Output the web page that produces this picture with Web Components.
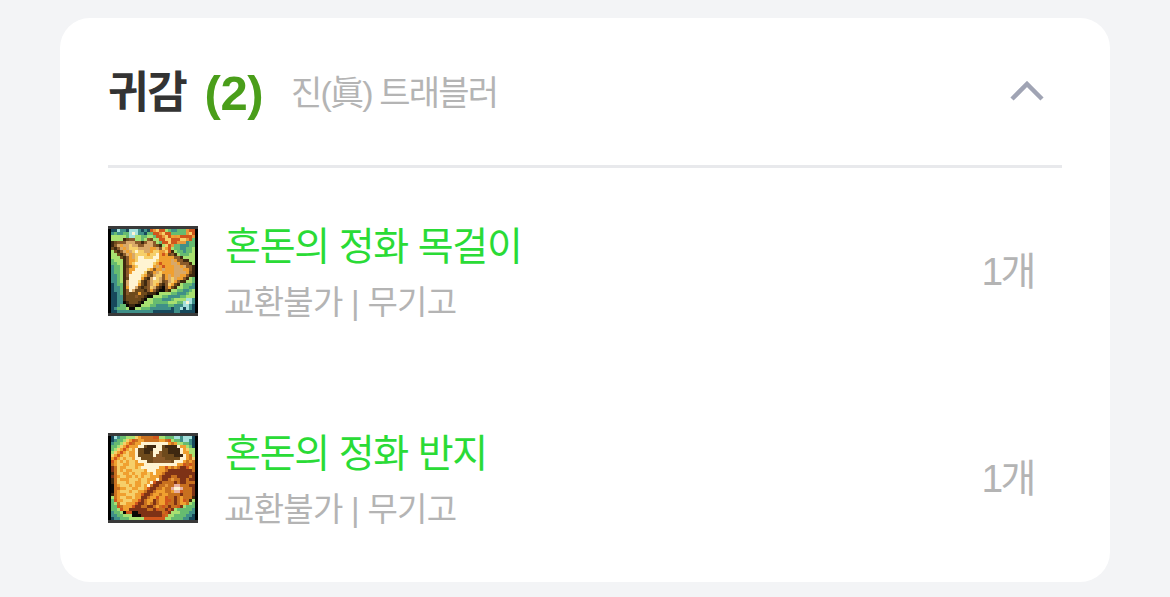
<!DOCTYPE html>
<html lang="ko">
<head>
<meta charset="utf-8">
<title>귀감</title>
<style>
  html, body { margin: 0; height: 100%; overflow: hidden; background: #f3f4f6; }
  body { padding: 18px 60px 15px; box-sizing: border-box; font-family: "Liberation Sans", "Noto Sans CJK KR", sans-serif; }
</style>
</head>
<body>
<set-card>
  <span slot="title">귀감</span>
  <span slot="count">(2)</span>
  <span slot="sub">진(眞) 트래블러</span>
  <set-item icon="necklace" name="혼돈의 정화 목걸이" info="교환불가 | 무기고" qty="1개"></set-item>
  <set-item icon="ring" name="혼돈의 정화 반지" info="교환불가 | 무기고" qty="1개"></set-item>
</set-card>

<script>
const PALETTE = {
  k: '#0a0806', d: '#3e2810', b: '#8a5a2a', o: '#e8983a', O: '#f0a030', y: '#f6cf6a', w: '#fff4d2', t: '#d8a868',
  r: '#d0561c', R: '#7e3216', g: '#a8e070', G: '#66bb70', T: '#3f8f88', N: '#17495c', L: '#a4e0dc',
  m: '#6e4a1c', c: '#c8701f', p: '#e8b0a0'
};

const ICONS = {
  necklace: [
    'NNLTTNLLLTNTNroyrrgGTTGGGorr',
    'TGTTGGLwLTTNGGrroyrrGGGGGoyr',
    'gggggGLLggGGggGrroyrOoOrrrro',
    'ggggdmbbggGgbmggrryyrrryyorG',
    'dmbbbtttbbdbttbgGrryrroooTGG',
    'dbtOttyttbbtttbmdgyroGGTTTGG',
    'mdbtOtyyyttttOOtbyOrgGGTTGGg',
    'gmdbtOtywyyttOyyOoyrdgGGTGGg',
    'ggmdbtOtyyyyOyywOrOmbdgGGGgg',
    'gggmdbOtywwyyywwOOOOObbdgggg',
    'GgggdbOOywwwwwwyOOOOtObbddgg',
    'GGggdbOywwwwwwyOrOOOttObbbdg',
    'TGGgdmbOywwwwwOtOrOOOttOtbbd',
    'TGGgdbOOwwwwyObOOtOOOtttOObd',
    'TGGgdbOwwwwymbOtyOOOOttttOmd',
    'TTGgdbwwwwyObmtyybOtOttOObdd',
    'TTGgdmwwwwOmdtwytbOtytOObdgG',
    'TTGgdtwwwymdbtyytmbtyObddggG',
    'NTGGdtwwwOmdbtyOmdbyOmdgGGGT',
    'NTTGdOwwtmdmbytmdkbOmdggGGTT',
    'NTTGdbwtmmmdbObdkkmdggGGTTGg',
    'NNTGdbmmmOmmdddkggggGGTTTGgg',
    'NNTTdmmmbmmdkkgggGGTTTTGGggg',
    'NNTTdmmmmmdkggGGGTTTGggggLLT',
    'NNTTkdmmmdkgggGGGGGgggGGLwLT',
    'NNTGGkddkkgggGGTTTTGGTTTLLTN',
    'NTGGGgkkggGGGTTTTTTTNTTLNLTN',
    'NNTTTTTTTTTTTTNNNNNNNTTNNNNN'
  ],
  ring: [
    'NLTGGgggyOccccrrggGGGLLTLLLN',
    'NTGGgyOrcOOcccccOOcrgGGTLLTN',
    'TGGgyOrcOOwwwwwwwwwOcOggGGTN',
    'GGgyOrOOOwwmdddwwmddddwOOgGN',
    'GgyOrOyOwmmdddwwwmmddddwOygg',
    'gyOrOyOOwmmddmwwbmmddddwOOgg',
    'yOrOyyOOwmmmmmwbbmmmmdddwOcg',
    'OrOyOyyOwwmmmmbbbbmmmmmwwOcy',
    'rOyOyOyyOwwwmmbbbbbbmwwwOcOc',
    'cOyyOOyyOOOwwwwwwwwwwwOOrcrc',
    'RcyOOyyyOywwwwwwOOrOcOcRRrOc',
    'RcyOyOOyyyyOwwwOOOcRRRRRRRRc',
    'dcyyOOyOyyOOyOwOOcRRRRRRRRRR',
    'RcOyyOOyOyOyyOOOcRRRccRRRRcR',
    'dcyOOOyyyOyyOOOwcRRcoccRRcRR',
    'dcyyyOyyOOyyOwrRRccccRcRRccc',
    'kcOyyyOyOOyOwcRRccoccppcccRR',
    'kccOOyyOOyyOrRRccOccpwwpcccR',
    'kcOyyyOyyOOcRRcOOOccOpprcccR',
    'dcOOOyyyOOrRRcOOcOOccccRcccR',
    'gcOyyOOyOORRcOOrOOrccRcOcccd',
    'GrOOyyyOOrRcOORcOOrrcRcOrcdg',
    'GgcyyOOOrRRcOcRcOOrccRcOOcgG',
    'GGrcOOOrRRccRRcOcrcRccrRgGGG',
    'GGgrOORRRRRRccRrccRrRgGGGGGT',
    'TGGgkrrkkRRRRRRRRcrRgggGGGTT',
    'TTGGgggkkkRRRRRRRrcggGGGGTTN',
    'NTTGGGgggggrrrrrrrggGGGGTTNN'
  ]
};

class ItemIcon extends HTMLElement {
  connectedCallback() {
    const rows = ICONS[this.getAttribute('name')] || [];
    let rects = '';
    rows.forEach((row, y) => {
      [...row].forEach((ch, x) => {
        rects += `<rect x="${x + 1}" y="${y + 1}" width="1" height="1" fill="${PALETTE[ch]}"/>`;
      });
    });
    this.attachShadow({ mode: 'open' }).innerHTML = `
      <style>
        :host { display: block; width: 90px; height: 90px; flex: none; }
        svg { display: block; width: 90px; height: 90px; }
      </style>
      <svg viewBox="0 0 30 30" shape-rendering="crispEdges">
        <rect width="30" height="30" fill="#000"/>
        <rect width="30" height="1" fill="#3a3a3a"/>
        <rect y="29" width="30" height="1" fill="#3a3a3a"/>
        ${rects}
      </svg>`;
  }
}

class SetItem extends HTMLElement {
  connectedCallback() {
    const a = n => this.getAttribute(n);
    this.attachShadow({ mode: 'open' }).innerHTML = `
      <style>
        :host { display: flex; align-items: center; height: 90px; }
        .text { flex: 1; margin-left: 28px; display: flex; flex-direction: column; gap: 13px; margin-top: 4px; }
        .name { font-size: 39px; line-height: 46px; color: #2adb36; letter-spacing: -1.2px; margin-left: -1px; }
        .info { font-size: 33px; line-height: 40px; color: #b4b4b4; letter-spacing: -.7px; margin-left: -2px; }
        .qty { font-size: 39px; line-height: 46px; color: #b4b4b4; letter-spacing: -2.5px; margin-right: 28px; margin-top: 2px; }
      </style>
      <item-icon name="${a('icon')}"></item-icon>
      <div class="text">
        <div class="name">${a('name')}</div>
        <div class="info">${a('info')}</div>
      </div>
      <div class="qty">${a('qty')}</div>`;
  }
}

class SetCard extends HTMLElement {
  constructor() {
    super();
    this.attachShadow({ mode: 'open' }).innerHTML = `
      <style>
        :host { display: block; background: #fff; border-radius: 30px; padding: 0 48px 59px; height: 564px; box-sizing: border-box; }
        header { display: flex; align-items: center; height: 145px; border-bottom: 3px solid #e8e9ec; padding-top: 2px; box-sizing: content-box; }
        .title { font-size: 44px; font-weight: 700; color: #333; letter-spacing: -1.2px; line-height: 48px; }
        .count { font-size: 49px; font-weight: 700; color: #4a9e1a; margin-left: 18px; line-height: 48px; letter-spacing: -.5px; }
        .sub { font-size: 34px; color: #b4b4b4; margin-left: 28px; letter-spacing: -1.8px; line-height: 48px; }
        svg { margin-left: auto; margin-right: 18px; margin-bottom: 3px; display: block; }
        .items { display: flex; flex-direction: column; gap: 117px; padding-top: 58px; }
      </style>
      <header>
        <span class="title"><slot name="title"></slot></span>
        <span class="count"><slot name="count"></slot></span>
        <span class="sub"><slot name="sub"></slot></span>
        <svg width="34" height="20" viewBox="0 0 34 20" fill="none" stroke="#a0a4b4" stroke-width="4.5" aria-hidden="true"><path d="M2 18 L17 3 L32 18"/></svg>
      </header>
      <div class="items"><slot></slot></div>`;
  }
}

customElements.define('item-icon', ItemIcon);
customElements.define('set-item', SetItem);
customElements.define('set-card', SetCard);
</script>
</body>
</html>
